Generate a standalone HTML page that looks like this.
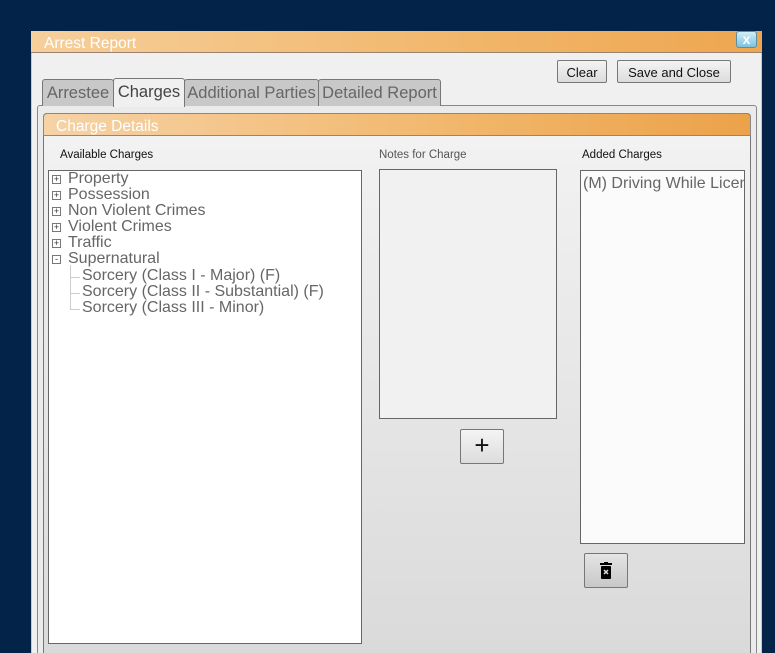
<!DOCTYPE html>
<html style="overflow:hidden;height:653px"><head><style>
html,body{margin:0;padding:0}
body{width:775px;height:653px;background:#032349;position:relative;overflow:hidden;font-family:"Liberation Sans",sans-serif}
.a{position:absolute}
.win{left:31px;top:31px;width:731px;height:622px;background:#f0f0f0;border:1px solid #c9c9c9;border-bottom:none;box-sizing:border-box}
.title{left:31px;top:31px;width:731px;height:22px;background:linear-gradient(90deg,#f6cf9b,#f1b66a 60%,#eea650);border-bottom:1px solid #9a8470;box-sizing:border-box;color:#fff;font-size:15.5px;padding:4px 0 0 13px}
.btn{background:linear-gradient(#f4f4f4,#dcdcdc);border:1px solid #777;border-radius:2px;box-sizing:border-box;font-size:13px;color:#111;text-align:center}
.tab{top:79px;height:27px;background:#c8c8c8;border:1px solid #777;border-bottom:none;box-sizing:border-box;color:#666;font-size:16.5px;padding-top:4px;text-align:center;border-radius:3px 3px 0 0}
.lbl{font-size:11.5px;color:#111}
.box{background:#fff;border:1px solid #666;box-sizing:border-box}
.t{font-size:16px;color:#666;line-height:16px;white-space:nowrap}
.pm{width:9px;height:9px;border:1px solid #777;box-sizing:border-box;font-size:9px;line-height:7px;text-align:center;color:#333}
</style></head><body>
<div class="a win"></div>
<div class="a title">Arrest Report</div>
<div class="a" style="left:736px;top:31px;width:21px;height:17px;background:linear-gradient(#d2eef8,#7cc3de);border:1px solid #5a8ea3;border-radius:3px;box-sizing:border-box;color:#fff;font-weight:bold;font-size:14px;text-align:center;line-height:14px">x</div>
<div class="a btn" style="left:557px;top:60px;width:50px;height:23px;padding-top:4px">Clear</div>
<div class="a btn" style="left:617px;top:60px;width:114px;height:23px;padding-top:4px">Save and Close</div>
<div class="a" style="left:37px;top:105px;width:720px;height:548px;border:1px solid #888;border-bottom:none;border-radius:3px 3px 0 0;box-sizing:border-box;background:#ebebeb"></div>
<div class="a tab" style="left:42px;width:72px">Arrestee</div>
<div class="a tab" style="left:113px;width:72px;top:78px;height:29px;background:#f0f0f0;color:#444">Charges</div>
<div class="a tab" style="left:184px;width:135px">Additional Parties</div>
<div class="a tab" style="left:318px;width:123px">Detailed Report</div>
<div class="a" style="left:43px;top:113px;width:708px;height:540px;border:1px solid #777;border-bottom:none;border-radius:4px 4px 0 0;box-sizing:border-box;background:linear-gradient(#f3f3f3,#dadada)"></div>
<div class="a" style="left:43px;top:113px;width:708px;height:23px;border:1px solid #888;border-radius:4px 4px 0 0;box-sizing:border-box;background:linear-gradient(90deg,#f6d2a5,#f1b66a 60%,#eca24a);color:#fff;font-size:15.5px;padding:4px 0 0 12px">Charge Details</div>
<div class="a lbl" style="left:60px;top:149px">Available Charges</div>
<div class="a lbl" style="left:379px;top:149px;color:#555">Notes for Charge</div>
<div class="a lbl" style="left:582px;top:149px">Added Charges</div>
<div class="a box" style="left:48px;top:170px;width:314px;height:474px"></div>
<div class="a box" style="left:379px;top:169px;width:178px;height:250px;background:#f1f1f1"></div>
<div class="a box" style="left:580px;top:170px;width:165px;height:374px;background:#fbfbfb;overflow:hidden"><div class="t" style="margin:5px 0 0 2px">(M) Driving While License Suspended</div></div>
<div class="a pm" style="left:52px;top:175px">+</div><div class="a t" style="left:68px;top:171px">Property</div>
<div class="a pm" style="left:52px;top:191px">+</div><div class="a t" style="left:68px;top:187px">Possession</div>
<div class="a pm" style="left:52px;top:207px">+</div><div class="a t" style="left:68px;top:203px">Non Violent Crimes</div>
<div class="a pm" style="left:52px;top:223px">+</div><div class="a t" style="left:68px;top:219px">Violent Crimes</div>
<div class="a pm" style="left:52px;top:239px">+</div><div class="a t" style="left:68px;top:235px">Traffic</div>
<div class="a pm" style="left:52px;top:255px">-</div><div class="a t" style="left:68px;top:251px">Supernatural</div>
<div class="a" style="left:70px;top:265px;width:0;height:44px;border-left:1px solid #ccc"></div>
<div class="a" style="left:70px;top:277px;width:10px;border-top:1px solid #ccc"></div>
<div class="a" style="left:70px;top:293px;width:10px;border-top:1px solid #ccc"></div>
<div class="a" style="left:70px;top:309px;width:10px;border-top:1px solid #ccc"></div>
<div class="a t" style="left:82px;top:268px">Sorcery (Class I - Major) (F)</div>
<div class="a t" style="left:82px;top:284px">Sorcery (Class II - Substantial) (F)</div>
<div class="a t" style="left:82px;top:300px">Sorcery (Class III - Minor)</div>
<div class="a btn" style="left:460px;top:429px;width:44px;height:35px;font-size:26px;line-height:30px">+</div>
<div class="a btn" style="left:584px;top:553px;width:44px;height:35px;background:linear-gradient(#e4e4e4,#c8c8c8)">
<svg width="14" height="18" viewBox="0 0 14 18" style="margin-top:8px"><rect x="1" y="1" width="12" height="2" fill="#000"/><rect x="5" y="0" width="4" height="2" fill="#000"/><rect x="2" y="4" width="10" height="13" rx="1" fill="#000"/><path d="M5 8l4 4M9 8l-4 4" stroke="#ddd" stroke-width="1.5"/></svg></div>
</body></html>
